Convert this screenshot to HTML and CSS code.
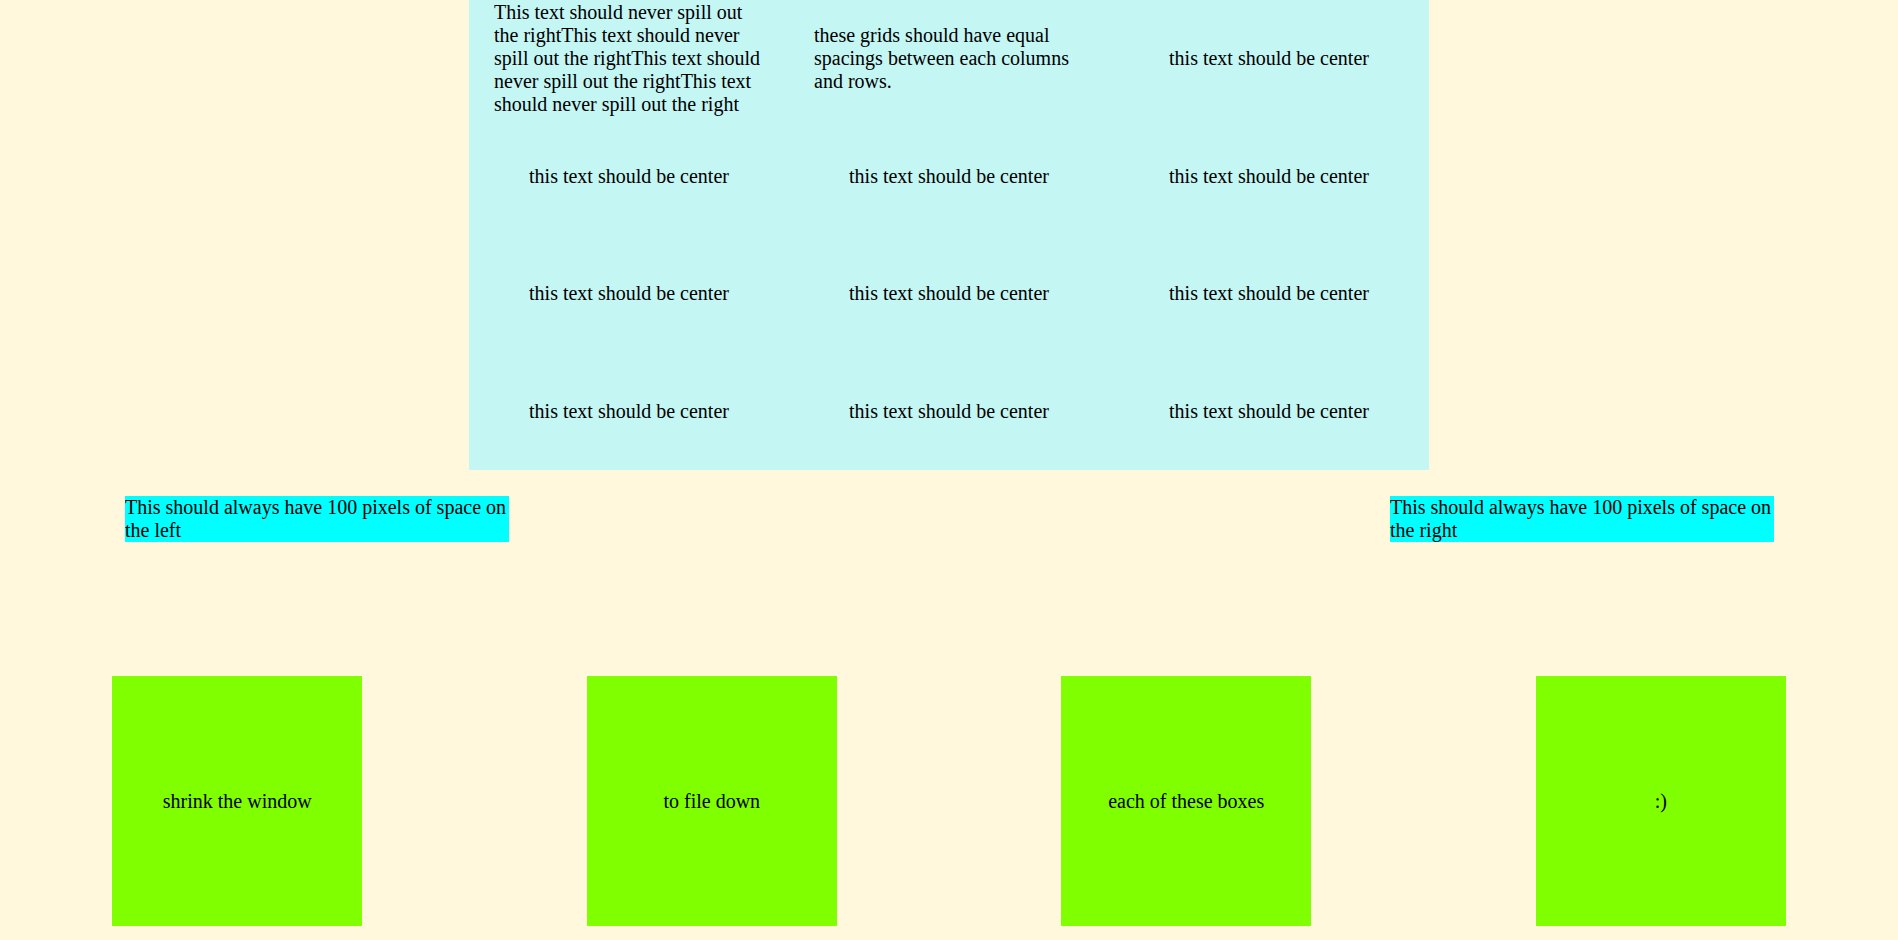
FILE: index.html
```html
<!DOCTYPE html>
<html>
<head>
<meta charset="utf-8">
<title>Layout test</title>
<link rel="stylesheet" href="styles.css">
</head>
<body>
<div class="grid">
  <div class="cell"><p class="txt">This text should never spill out the rightThis text should never spill out the rightThis text should never spill out the rightThis text should never spill out the right</p></div>
  <div class="cell"><p class="txt">these grids should have equal spacings between each columns and rows.</p></div>
  <div class="cell"><p class="txt">this text should be center</p></div>
  <div class="cell"><p class="txt">this text should be center</p></div>
  <div class="cell"><p class="txt">this text should be center</p></div>
  <div class="cell"><p class="txt">this text should be center</p></div>
  <div class="cell"><p class="txt">this text should be center</p></div>
  <div class="cell"><p class="txt">this text should be center</p></div>
  <div class="cell"><p class="txt">this text should be center</p></div>
  <div class="cell"><p class="txt">this text should be center</p></div>
  <div class="cell"><p class="txt">this text should be center</p></div>
  <div class="cell"><p class="txt">this text should be center</p></div>
</div>
<div class="sides">
  <div class="side-box">This should always have 100 pixels of space on the left</div>
  <div class="side-box">This should always have 100 pixels of space on the right</div>
</div>
<div class="boxes">
  <div class="box">shrink the window</div>
  <div class="box">to file down</div>
  <div class="box">each of these boxes</div>
  <div class="box">:)</div>
</div>
</body>
</html>
```
FILE: styles.css
```css
html, body {
  margin: 0;
  padding: 0;
}
body {
  background: #fff8dc;
  font-family: "Liberation Serif", "Times New Roman", serif;
  font-size: 20px;
  line-height: 23px;
  color: #000;
}
.grid {
  width: 960px;
  height: 470px;
  margin: 0 auto;
  background: #c4f6f4;
  display: grid;
  grid-template-columns: repeat(3, 1fr);
  grid-template-rows: repeat(4, 1fr);
}
.cell {
  display: flex;
  align-items: center;
  justify-content: center;
  padding: 0 25px;
  min-width: 0;
}
.txt {
  margin: 0;
}
.sides {
  display: flex;
  justify-content: space-between;
  padding: 0 124px 0 125px;
  margin-top: 26px;
}
.side-box {
  width: 384px;
  background: #00ffff;
}
.boxes {
  display: flex;
  justify-content: space-around;
  margin-top: 134px;
}
.box {
  width: 250px;
  height: 250px;
  background: #80ff00;
  display: flex;
  align-items: center;
  justify-content: center;
  text-align: center;
}
```
